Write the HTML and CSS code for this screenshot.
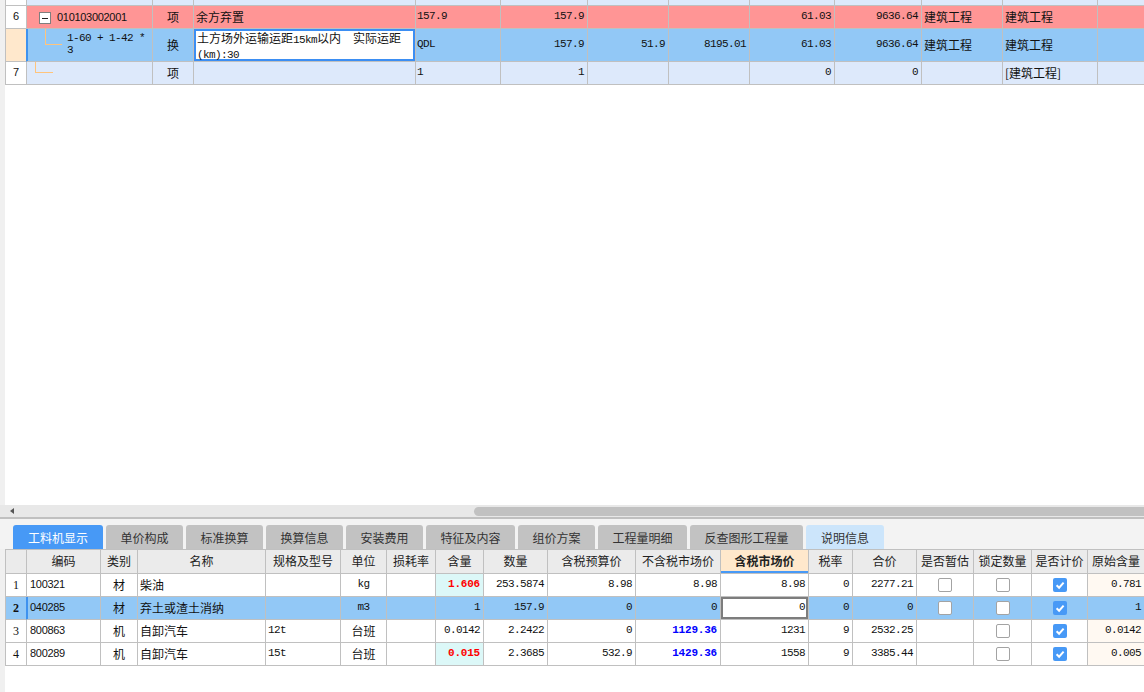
FILE: index.html
```html
<!DOCTYPE html>
<html lang="zh">
<head>
<meta charset="utf-8">
<title>工料机显示</title>
<link rel="stylesheet" href="styles.css">
</head>
<body>
<div class="app">
  <section class="top-pane">
    <div class="grid top-grid">
      <div class="row r-partial">
        <div class="c num"></div><div class="c"></div><div class="c"></div><div class="c"></div><div class="c"></div><div class="c"></div><div class="c"></div><div class="c"></div><div class="c"></div><div class="c"></div><div class="c"></div><div class="c"></div><div class="c"></div>
      </div>
      <div class="row r-pink">
        <div class="c num s">6</div>
        <div class="c code-top"><span class="tree-box"><span class="minus"></span></span><span class="s code-txt">010103002001</span></div>
        <div class="c ctr">项</div>
        <div class="c">余方弃置</div>
        <div class="c m l1">157.9</div>
        <div class="c m r">157.9</div>
        <div class="c"></div>
        <div class="c"></div>
        <div class="c m r">61.03</div>
        <div class="c m r">9636.64</div>
        <div class="c">建筑工程</div>
        <div class="c">建筑工程</div>
        <div class="c"></div>
      </div>
      <div class="row r-sel">
        <div class="c num sel-num"></div>
        <div class="c code-sub sel-first"><span class="elbow e-sub"></span><span class="m sub-txt">1-60 + 1-42 *<br>3</span></div>
        <div class="c ctr">换</div>
        <div class="c edit"><span class="edit-txt"><span class="line">土方场外运输运距<span class="m">15km</span>以内<span class="m">&nbsp;&nbsp;</span>实际运距</span><span class="line"><span class="m">(km):30</span></span></span></div>
        <div class="c m l1">QDL</div>
        <div class="c m r">157.9</div>
        <div class="c m r">51.9</div>
        <div class="c m r">8195.01</div>
        <div class="c m r">61.03</div>
        <div class="c m r">9636.64</div>
        <div class="c">建筑工程</div>
        <div class="c">建筑工程</div>
        <div class="c"></div>
      </div>
      <div class="row r-light">
        <div class="c num s">7</div>
        <div class="c code-leaf"><span class="elbow e-leaf"></span></div>
        <div class="c ctr">项</div>
        <div class="c"></div>
        <div class="c m l1">1</div>
        <div class="c m r">1</div>
        <div class="c"></div>
        <div class="c"></div>
        <div class="c m r">0</div>
        <div class="c m r">0</div>
        <div class="c"></div>
        <div class="c">[建筑工程]</div>
        <div class="c"></div>
      </div>
    </div>
  </section>

  <div class="hscroll">
    <span class="arrow-left"></span>
    <span class="thumb"></span>
  </div>
  <div class="splitter"></div>

  <nav class="tabs">
    <span class="tab active w90">工料机显示</span>
    <span class="tab w77">单价构成</span>
    <span class="tab w77">标准换算</span>
    <span class="tab w77">换算信息</span>
    <span class="tab w77">安装费用</span>
    <span class="tab w89">特征及内容</span>
    <span class="tab w77">组价方案</span>
    <span class="tab w89">工程量明细</span>
    <span class="tab w113">反查图形工程量</span>
    <span class="tab light w78">说明信息</span>
  </nav>

  <section class="bottom-pane">
    <div class="grid bottom-grid">
      <div class="row head">
        <div class="c"></div>
        <div class="c ctr">编码</div>
        <div class="c ctr">类别</div>
        <div class="c ctr">名称</div>
        <div class="c ctr">规格及型号</div>
        <div class="c ctr">单位</div>
        <div class="c ctr">损耗率</div>
        <div class="c ctr">含量</div>
        <div class="c ctr">数量</div>
        <div class="c ctr">含税预算价</div>
        <div class="c ctr">不含税市场价</div>
        <div class="c ctr head-active">含税市场价</div>
        <div class="c ctr">税率</div>
        <div class="c ctr">合价</div>
        <div class="c ctr">是否暂估</div>
        <div class="c ctr">锁定数量</div>
        <div class="c ctr">是否计价</div>
        <div class="c ctr">原始含量</div>
      </div>

      <div class="row data">
        <div class="c num serif">1</div>
        <div class="c s code">100321</div>
        <div class="c ctr">材</div>
        <div class="c">柴油</div>
        <div class="c"></div>
        <div class="c m ctr">kg</div>
        <div class="c"></div>
        <div class="c m r red cyan">1.606</div>
        <div class="c m r">253.5874</div>
        <div class="c m r">8.98</div>
        <div class="c m r">8.98</div>
        <div class="c m r">8.98</div>
        <div class="c m r">0</div>
        <div class="c m r">2277.21</div>
        <div class="c ctr"><span class="cb"></span></div>
        <div class="c ctr"><span class="cb"></span></div>
        <div class="c ctr"><span class="cb on"><svg viewBox="0 0 14 14" width="14" height="14"><path d="M3.6 7.3 L6.1 9.7 L10.6 4.7" fill="none" stroke="#fff" stroke-width="2"/></svg></span></div>
        <div class="c m r cream">0.781</div>
      </div>

      <div class="row data sel">
        <div class="c num serif sel-num bold">2</div>
        <div class="c s code sel-first">040285</div>
        <div class="c ctr">材</div>
        <div class="c">弃土或渣土消纳</div>
        <div class="c"></div>
        <div class="c m ctr">m3</div>
        <div class="c"></div>
        <div class="c m r">1</div>
        <div class="c m r">157.9</div>
        <div class="c m r">0</div>
        <div class="c m r">0</div>
        <div class="c m r cell-edit">0</div>
        <div class="c m r">0</div>
        <div class="c m r">0</div>
        <div class="c ctr"><span class="cb"></span></div>
        <div class="c ctr"><span class="cb"></span></div>
        <div class="c ctr"><span class="cb on"><svg viewBox="0 0 14 14" width="14" height="14"><path d="M3.6 7.3 L6.1 9.7 L10.6 4.7" fill="none" stroke="#fff" stroke-width="2"/></svg></span></div>
        <div class="c m r">1</div>
      </div>

      <div class="row data">
        <div class="c num serif">3</div>
        <div class="c s code">800863</div>
        <div class="c ctr">机</div>
        <div class="c">自卸汽车</div>
        <div class="c m">12t</div>
        <div class="c ctr">台班</div>
        <div class="c"></div>
        <div class="c m r">0.0142</div>
        <div class="c m r">2.2422</div>
        <div class="c m r">0</div>
        <div class="c m r blue">1129.36</div>
        <div class="c m r">1231</div>
        <div class="c m r">9</div>
        <div class="c m r">2532.25</div>
        <div class="c"></div>
        <div class="c ctr"><span class="cb"></span></div>
        <div class="c ctr"><span class="cb on"><svg viewBox="0 0 14 14" width="14" height="14"><path d="M3.6 7.3 L6.1 9.7 L10.6 4.7" fill="none" stroke="#fff" stroke-width="2"/></svg></span></div>
        <div class="c m r cream">0.0142</div>
      </div>

      <div class="row data">
        <div class="c num serif">4</div>
        <div class="c s code">800289</div>
        <div class="c ctr">机</div>
        <div class="c">自卸汽车</div>
        <div class="c m">15t</div>
        <div class="c ctr">台班</div>
        <div class="c"></div>
        <div class="c m r red cyan">0.015</div>
        <div class="c m r">2.3685</div>
        <div class="c m r">532.9</div>
        <div class="c m r blue">1429.36</div>
        <div class="c m r">1558</div>
        <div class="c m r">9</div>
        <div class="c m r">3385.44</div>
        <div class="c"></div>
        <div class="c ctr"><span class="cb"></span></div>
        <div class="c ctr"><span class="cb on"><svg viewBox="0 0 14 14" width="14" height="14"><path d="M3.6 7.3 L6.1 9.7 L10.6 4.7" fill="none" stroke="#fff" stroke-width="2"/></svg></span></div>
        <div class="c m r cream">0.005</div>
      </div>
    </div>
  </section>
</div>
</body>
</html>
```

FILE: styles.css
```css
* { box-sizing: border-box; }
html, body { margin: 0; padding: 0; }
body {
  width: 1144px;
  height: 692px;
  overflow: hidden;
  background: #fff;
  color: #111;
  font-family: "Noto Sans CJK SC", "Liberation Sans", sans-serif;
  font-size: 12px;
}
.app { display: flex; flex-direction: column; height: 692px; }

/* panes */
.top-pane {
  height: 505px;
  flex: none;
  border-left: 5px solid #f0f0f0;
  background: #fff;
  overflow: hidden;
}
.bottom-pane {
  flex: 1;
  border-left: 5px solid #f0f0f0;
  background: #fff;
  overflow: hidden;
}

/* grids */
.grid { width: max-content; border-left: 1px solid #c0c0c0; }
.row { display: grid; }
.top-grid .row {
  grid-template-columns: 21px 126px 41px 222px 85px 87px 81px 81px 85px 87px 81px 95px 60px;
}
.bottom-grid { border-top: 1px solid #c0c0c0; }
.bottom-grid .row {
  grid-template-columns: 21px 74px 37px 128px 75px 46px 49px 48px 64px 88px 85px 88px 44px 64px 57px 58px 56px 57px;
}

.c {
  border-right: 1px solid #c0c0c0;
  border-bottom: 1px solid #c0c0c0;
  display: flex;
  align-items: center;
  padding: 0 2px;
  white-space: nowrap;
  overflow: hidden;
  line-height: 1.2;
}
.ctr { justify-content: center; }
.r { justify-content: flex-end; padding-right: 3px; }
.l1 { padding-left: 1px; }

.m {
  font-family: "Liberation Mono", "DejaVu Sans Mono", monospace;
  font-size: 11px;
  letter-spacing: -0.6px;
}
.s {
  font-family: "Liberation Sans", "Noto Sans", sans-serif;
  font-size: 11px;
  letter-spacing: -0.3px;
}
.serif {
  font-family: "Liberation Serif", serif;
  font-size: 12px;
}
.bold { font-weight: bold; }

/* top rows */
.r-partial { height: 6px; }
.r-partial .c { background: #dde9fb; }
.r-pink { height: 23px; }
.r-pink .c { background: #ff9595; }
.r-sel { height: 33px; }
.r-sel .c { background: #92c8f6; }
.r-light { height: 23px; }
.r-light .c { background: #dde9fb; }
.top-grid .num { background: #fff; justify-content: center; padding: 0; }
.top-grid .sel-num, .bottom-grid .sel-num { background: #ffe8cc; border-right-color: #3f92ee; }
.sel-first { box-shadow: inset 1px 0 #3f92ee; }

.code-top { padding-left: 12px; }
.tree-box {
  width: 12px;
  height: 12px;
  border: 1px solid #7f7f7f;
  background: #fff;
  display: flex;
  align-items: center;
  justify-content: center;
  margin-top: 2px;
  margin-right: 6px;
  flex: none;
}
.minus { width: 6px; height: 1px; background: #222; }
.code-txt { padding-top: 1px; }

.code-sub { align-items: flex-start; padding-left: 18px; }
.code-leaf { align-items: flex-start; padding-left: 8px; }
.elbow {
  flex: none;
  border-left: 1px solid #ffc47c;
  border-bottom: 1px solid #ffc47c;
}
.e-sub { width: 17px; height: 16px; }
.e-leaf { width: 18px; height: 11px; }
.sub-txt { margin-left: 5px; padding-top: 3px; line-height: 12px; white-space: normal; }

.r-sel .edit {
  background: #fff;
  align-items: flex-start;
  padding: 1px 3px 0;
  overflow: visible;
  box-shadow: inset 0 0 0 2px #3b8ef3;
}
.edit-txt { display: block; }
.edit-txt .line {
  display: block;
  height: 15px;
  line-height: 15px;
  white-space: nowrap;
}

/* scrollbar + splitter */
.hscroll {
  height: 12px;
  flex: none;
  background: #e8e8e8;
  display: flex;
  align-items: center;
  padding-left: 10px;
}
.arrow-left {
  width: 0;
  height: 0;
  border-top: 3px solid transparent;
  border-bottom: 3px solid transparent;
  border-right: 4px solid #555;
}
.thumb {
  margin-left: auto;
  width: 670px;
  height: 9px;
  background: #c1c1c1;
  border-radius: 5px 0 0 5px;
}
.splitter { height: 2px; flex: none; background: #c0c0c0; }

/* tabs */
.tabs {
  height: 30px;
  flex: none;
  background: #f3f3f3;
  display: flex;
  align-items: flex-end;
  gap: 3px;
  padding-left: 13px;
}
.tab {
  height: 24px;
  display: flex;
  align-items: center;
  justify-content: center;
  background: #c2c2c2;
  color: #333;
  border-radius: 3px 3px 0 0;
  font-size: 12px;
}
.tab.active { background: #4799f6; color: #fff; }
.tab.light { background: #cce5fb; }
.w77 { width: 77px; }
.w78 { width: 78px; }
.w89 { width: 89px; }
.w90 { width: 90px; }
.w113 { width: 113px; }

/* bottom table */
.head { height: 24px; }
.head .c { background: #ebebeb; color: #222; }
.head .head-active {
  background: #ffe8cc;
  font-weight: bold;
  box-shadow: inset 0 -2px #4799f6;
}
.data { height: 23px; }
.bottom-grid .num { justify-content: center; padding: 0; }
.code { padding-left: 3px; }
.sel .c { background: #92c8f6; }
.sel .cell-edit { background: #fff; box-shadow: inset 0 0 0 2px #7d7d7d; }
.cyan { background: #dcf8f8; }
.cream { background: #fff9f2; }
.red { color: #ff0000; font-weight: bold; letter-spacing: -0.2px; }
.blue { color: #0000ff; font-weight: bold; letter-spacing: -0.2px; }

.cb {
  width: 14px;
  height: 14px;
  border: 1px solid #a3a3a3;
  border-radius: 2px;
  background: #fff;
  display: block;
}
.cb.on { border: none; background: #4799f6; }
.cb svg { display: block; }
```
